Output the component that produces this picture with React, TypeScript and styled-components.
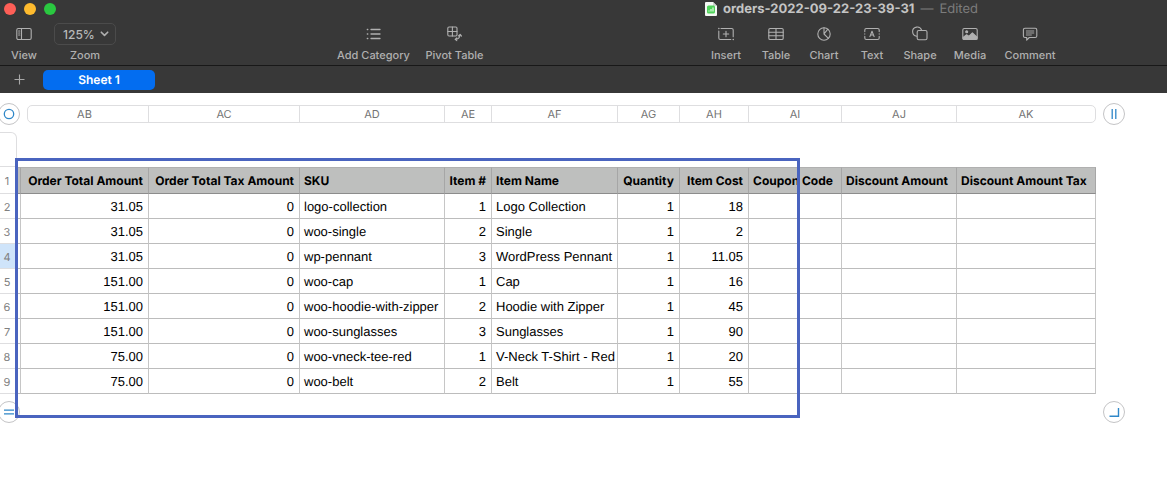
import React from "react";
import styled, { createGlobalStyle } from "styled-components";

const GlobalStyle = createGlobalStyle`
  *, *::before, *::after { box-sizing: border-box; }
  body { margin: 0; background: #fff; text-rendering: geometricPrecision; }
  button, input { font: inherit; color: inherit; text-rendering: inherit; }
`;

const uiFont = `Inter, "Liberation Sans", sans-serif`;
const sheetFont = `"Liberation Sans", Arial, sans-serif`;

const Window = styled.div`
  font-family: ${uiFont};
  overflow-x: hidden;
  min-height: 100vh;
  background: #fff;
`;

const Chrome = styled.header`
  background: #383838;
  color: #b4b4b4;
`;

const TitleBar = styled.div`
  display: flex;
  align-items: center;
  justify-content: space-between;
  height: 18px;
  padding: 0 189px 0 4px;
`;

const Lights = styled.div`
  display: flex;
  gap: 8px;
`;

const Light = styled.button<{ $color: string }>`
  width: 12px;
  height: 12px;
  padding: 0;
  border: 0;
  border-radius: 50%;
  background: ${(p) => p.$color};
`;

const Title = styled.h1`
  display: flex;
  align-items: center;
  gap: 6px;
  margin: 0;
  font-size: 13px;
  line-height: 18px;
  font-weight: 700;
  color: #c4c4c4;
  white-space: nowrap;
`;

const Edited = styled.span`
  display: flex;
  gap: 6px;
  font-weight: 400;
  color: #7c7c7c;
`;

const Toolbar = styled.div`
  display: flex;
  justify-content: space-between;
  height: 48px;
  padding: 4px 104px 0 0;
  border-bottom: 1px solid #181818;
`;

const Group = styled.div<{ $end?: number }>`
  display: flex;
  padding-right: ${(p) => p.$end ?? 0}px;
`;

const Tool = styled.button<{ $width: number }>`
  display: flex;
  flex-direction: column;
  align-items: center;
  width: ${(p) => p.$width}px;
  height: 42px;
  padding: 0;
  border: 0;
  background: none;
  font-size: 11px;
  line-height: 18px;
  font-weight: 500;
  color: #b0b0b0;
  white-space: nowrap;

  svg { display: block; height: 24px; }
`;

const ZoomTool = styled.label`
  display: flex;
  flex-direction: column;
  align-items: center;
  width: 74px;
  font-size: 11px;
  line-height: 18px;
  font-weight: 500;
  color: #b0b0b0;
`;

const ZoomBox = styled.span`
  display: grid;
  align-items: center;
  width: 62px;
  height: 22px;
  margin: 1px 0;
  border: 1px solid #4b4b4b;
  border-radius: 5px;

  > * { grid-area: 1 / 1; }
  svg { justify-self: end; margin-right: 6px; pointer-events: none; }
`;

const ZoomSelect = styled.select`
  appearance: none;
  width: 100%;
  height: 20px;
  padding: 0 0 0 8px;
  border: 0;
  background: transparent;
  font-family: inherit;
  font-size: 12px;
  font-weight: 500;
  color: #b8b8b8;
`;

const Tabs = styled.nav`
  display: flex;
  align-items: center;
  gap: 16px;
  height: 27px;
  padding-left: 12px;
`;

const AddSheet = styled.button`
  display: flex;
  justify-content: center;
  width: 15px;
  padding: 0;
  border: 0;
  background: none;
  color: #a8a8a8;
`;

const Tab = styled.button`
  width: 112px;
  height: 20px;
  padding: 0;
  border: 0;
  border-radius: 5px;
  background: #036df0;
  color: #fff;
  font-size: 12px;
  line-height: 20px;
  font-weight: 600;
`;

const Canvas = styled.main`
  position: relative;
  width: max-content;
  min-width: 100%;
  padding-top: 10px;
`;

const HandleRow = styled.div`
  display: flex;
  align-items: center;
  gap: 7px;
  margin-left: -2px;
`;

const Handle = styled.button`
  display: flex;
  align-items: center;
  justify-content: center;
  width: 22px;
  height: 22px;
  padding: 0;
  border: 1px solid #c4c4c6;
  border-radius: 50%;
  background: #fff;
  color: #2f87c8;
`;

const Letters = styled.div`
  display: flex;
  width: 1069px;
  height: 18px;
  border: 1px solid #dedee0;
  border-radius: 5px;
`;

const Letter = styled.div<{ $width: number }>`
  flex: 0 0 ${(p) => p.$width}px;
  border-right: 1px solid #dedee0;
  font-size: 11px;
  line-height: 16px;
  color: #747474;
  text-align: center;

  &:first-child { padding-right: 7px; }
  &:last-child { flex: 1; border-right: 0; }
`;

const Grid = styled.table`
  width: 1096px;
  margin: 7px 0;
  table-layout: fixed;
  border-collapse: separate;
  border-spacing: 0;
  font-family: ${sheetFont};
  font-size: 13px;
  line-height: 16px;
  color: #000;
`;

const Corner = styled.th`
  height: 35px;
  padding: 0;
  border: 1px solid #dedee0;
  border-left: 0;
  border-radius: 0 6px 0 0;
`;

const RowHead = styled.th<{ $active?: boolean }>`
  height: 25px;
  padding: 1px 2px 0 0;
  border-right: 1px solid #dedee0;
  border-bottom: 1px solid #dedee0;
  background: ${(p) => (p.$active ? "#cfe4fa" : "#fff")};
  font-family: ${uiFont};
  font-size: 11px;
  font-weight: 400;
  color: #808080;
  text-align: center;
`;

const HeadCell = styled.th<{ $right?: boolean }>`
  height: 27px;
  padding: 0 5px 0 4px;
  border-right: 1px solid #a6a6a6;
  border-top: 1px solid #b0b0b0;
  border-bottom: 1px solid #8c8c8c;
  background: #bebfbe;
  font-family: ${uiFont};
  font-size: 12px;
  font-weight: 700;
  text-align: ${(p) => (p.$right ? "right" : "left")};
  white-space: nowrap;
`;

const Cell = styled.td<{ $right?: boolean }>`
  height: 25px;
  padding: 2px 5px 0 4px;
  border-right: 1px solid #c6c6c6;
  border-bottom: 1px solid #bcbcbc;
  text-align: ${(p) => (p.$right ? "right" : "left")};
  white-space: nowrap;
`;

const Highlight = styled.div`
  position: absolute;
  top: 65px;
  left: 15px;
  width: 785px;
  height: 260px;
  border: 3px solid #4a64bf;
  pointer-events: none;
`;

const BottomRow = styled(HandleRow)`
  gap: 1083px;
`;

const columns = [
  { id: "AB", title: "Order Total Amount", width: 128, right: true },
  { id: "AC", title: "Order Total Tax Amount", width: 151, right: true },
  { id: "AD", title: "SKU", width: 145 },
  { id: "AE", title: "Item #", width: 47, right: true },
  { id: "AF", title: "Item Name", width: 126 },
  { id: "AG", title: "Quantity", width: 62, right: true },
  { id: "AH", title: "Item Cost", width: 69, right: true },
  { id: "AI", title: "Coupon Code", width: 93 },
  { id: "AJ", title: "Discount Amount", width: 115 },
  { id: "AK", title: "Discount Amount Tax", width: 139 },
];

const orders = [
  ["31.05", "0", "logo-collection", "1", "Logo Collection", "1", "18"],
  ["31.05", "0", "woo-single", "2", "Single", "1", "2"],
  ["31.05", "0", "wp-pennant", "3", "WordPress Pennant", "1", "11.05"],
  ["151.00", "0", "woo-cap", "1", "Cap", "1", "16"],
  ["151.00", "0", "woo-hoodie-with-zipper", "2", "Hoodie with Zipper", "1", "45"],
  ["151.00", "0", "woo-sunglasses", "3", "Sunglasses", "1", "90"],
  ["75.00", "0", "woo-vneck-tee-red", "1", "V-Neck T-Shirt - Red", "1", "20"],
  ["75.00", "0", "woo-belt", "2", "Belt", "1", "55"],
];

const Icon = ({ children }: { children: React.ReactNode }) => (
  <svg width="20" height="24" viewBox="0 0 20 24" fill="none" stroke="currentColor" strokeWidth="1.1" strokeLinecap="round" strokeLinejoin="round" aria-hidden="true">
    {children}
  </svg>
);

const icons = {
  view: (
    <>
      <rect x="2.8" y="6.5" width="14.4" height="11" rx="1.5" />
      <path d="M7.5 6.5v11M4.6 9h1.2M4.6 11h1.2M4.6 13h1.2" />
    </>
  ),
  category: <path d="M7 7.5h9M7 12h9M7 16.5h9M3.3 7.5h.5M3.3 12h.5M3.3 16.5h.5" strokeWidth="1.3" />,
  pivot: (
    <>
      <rect x="2.8" y="5" width="9.2" height="9" rx="1.2" />
      <path d="M7.4 5v9M2.8 9.5h9.2M10.5 17.3c2.8 0 4.3-1.5 4.6-4.6M13.5 14l1.7-1.7 1.3 1.8M11.8 15.8l-1.7 1.5 1.7 1.3" />
    </>
  ),
  insert: (
    <>
      <path d="M5 6.5h10.7q1.5 0 1.5 1.5v6.8M2.8 9v7q0 1.5 1.5 1.5h10.5M10 9.3v5.4M7.3 12h5.4" />
      <path d="M2.8 6.5h.1M17.2 17.5h.1" strokeWidth="1.5" />
    </>
  ),
  table: (
    <>
      <rect x="2.8" y="6.5" width="14.4" height="11" rx="1.3" />
      <path d="M10 6.5v11M2.8 10.2h14.4M2.8 13.8h14.4" />
    </>
  ),
  chart: (
    <>
      <circle cx="10" cy="12" r="6.2" />
      <path d="M10 5.8V12l4.4 4.4M10 12l3.8-4.8" />
    </>
  ),
  text: (
    <>
      <path d="M2.8 9.6V8q0-1.5 1.5-1.5h11.4q1.5 0 1.5 1.5v1.6M17.2 14.4V16q0 1.5-1.5 1.5H4.3q-1.5 0-1.5-1.5v-1.6M2.8 11.9v.2M17.2 11.9v.2" />
      <path d="M7.9 14.6L10 9.2l2.1 5.4M8.6 13h2.8" />
    </>
  ),
  shape: (
    <>
      <path d="M6.8 14.2A4.6 4.6 0 1 1 11.6 8.2" />
      <rect x="7.2" y="8.5" width="9.8" height="9.3" rx="1.6" />
    </>
  ),
  media: (
    <>
      <rect x="2.8" y="6.5" width="14.4" height="11" rx="1.5" />
      <path d="M3.2 15.5l3.4-2.7 2.2 1.5 3.6-3.4 4.6 4.2v2H3.2z" fill="currentColor" />
      <circle cx="6.7" cy="9.7" r="1" fill="currentColor" />
    </>
  ),
  comment: (
    <>
      <path d="M5 6.3h10.2q1.6 0 1.6 1.6v6q0 1.6-1.6 1.6H9.3l-2.6 2.7v-2.7H5q-1.6 0-1.6-1.6v-6q0-1.6 1.6-1.6z" />
      <path d="M6.4 9h7.4M6.4 11h7.4M6.4 13h5" strokeWidth="0.9" />
    </>
  ),
};

type ToolItem = [keyof typeof icons, string, number];

const categoryTools: ToolItem[] = [
  ["category", "Add Category", 82],
  ["pivot", "Pivot Table", 80],
];

const insertTools: ToolItem[] = [
  ["insert", "Insert", 50],
  ["table", "Table", 50],
  ["chart", "Chart", 46],
  ["text", "Text", 50],
  ["shape", "Shape", 46],
  ["media", "Media", 54],
  ["comment", "Comment", 66],
];

const renderTools = (items: ToolItem[]) =>
  items.map(([icon, label, width]) => (
    <Tool key={label} $width={width}>
      <Icon>{icons[icon]}</Icon>
      {label}
    </Tool>
  ));

export default function App() {
  return (
    <Window>
      <GlobalStyle />
      <Chrome>
        <TitleBar>
          <Lights>
            <Light $color="#fe5f57" aria-label="Close" />
            <Light $color="#febb2e" aria-label="Minimize" />
            <Light $color="#2ac840" aria-label="Full screen" />
          </Lights>
          <Title>
            <svg width="12" height="14" viewBox="0 0 12 14" aria-hidden="true">
              <path d="M1 0h7l4 4v9q0 1-1 1H1q-1 0-1-1V1q0-1 1-1z" fill="#f5f8f5" />
              <path d="M8 0l4 4H8z" fill="#cfd4cf" />
              <rect x="2" y="3.5" width="8" height="8" rx="1.5" fill="#4fd35a" />
              <path d="M4 9.5V8.5M6 9.5V7M8 9.5v-4" stroke="#c9f7cc" strokeWidth="1.4" />
            </svg>
            orders-2022-09-22-23-39-31
            <Edited>
              <span>—</span>
              <span>Edited</span>
            </Edited>
          </Title>
        </TitleBar>
        <Toolbar>
          <Group $end={4}>
            {renderTools([["view", "View", 48]])}
            <ZoomTool>
              <ZoomBox>
                <ZoomSelect defaultValue="125%">
                  <option>100%</option>
                  <option>125%</option>
                  <option>150%</option>
                </ZoomSelect>
                <svg width="9" height="6" viewBox="0 0 9 6" fill="none" stroke="currentColor" strokeWidth="1.6" strokeLinecap="round" strokeLinejoin="round" aria-hidden="true">
                  <path d="M1.3 1.2l3.2 3.2 3.2-3.2" />
                </svg>
              </ZoomBox>
              Zoom
            </ZoomTool>
          </Group>
          <Group>{renderTools(categoryTools)}</Group>
          <Group>{renderTools(insertTools)}</Group>
        </Toolbar>
        <Tabs aria-label="Sheets">
          <AddSheet aria-label="Add sheet">
            <svg width="11" height="11" viewBox="0 0 11 11" stroke="currentColor" strokeWidth="1.1" aria-hidden="true">
              <path d="M5.5 .5v10M.5 5.5h10" />
            </svg>
          </AddSheet>
          <Tab>Sheet 1</Tab>
        </Tabs>
      </Chrome>
      <Canvas>
        <HandleRow>
          <Handle aria-label="Select table">
            <svg width="12" height="12" viewBox="0 0 12 12" fill="none" stroke="currentColor" strokeWidth="1.3">
              <circle cx="6" cy="6" r="4.7" />
            </svg>
          </Handle>
          <Letters>
            {columns.map((c, i) => (
              <Letter key={c.id} $width={i === 0 ? c.width - 7 : c.width}>
                {c.id}
              </Letter>
            ))}
          </Letters>
          <Handle aria-label="Add columns">
            <svg width="12" height="12" viewBox="0 0 12 12" stroke="currentColor" strokeWidth="1.3">
              <path d="M4.2 1v10M7.8 1v10" />
            </svg>
          </Handle>
        </HandleRow>
        <Grid>
          <colgroup>
            <col width={17} />
            <col width={4} />
            {columns.map((c) => (
              <col key={c.id} width={c.width} />
            ))}
          </colgroup>
          <thead>
            <tr>
              <Corner />
              <td colSpan={11} />
            </tr>
            <tr>
              <RowHead scope="row">1</RowHead>
              <HeadCell />
              {columns.map((c) => (
                <HeadCell key={c.id} scope="col" $right={c.right}>
                  {c.title}
                </HeadCell>
              ))}
            </tr>
          </thead>
          <tbody>
            {orders.map((row, r) => (
              <tr key={r}>
                <RowHead scope="row" $active={r === 2}>
                  {r + 2}
                </RowHead>
                <Cell />
                {columns.map((c, i) => (
                  <Cell key={c.id} $right={c.right}>
                    {row[i]}
                  </Cell>
                ))}
              </tr>
            ))}
          </tbody>
        </Grid>
        <BottomRow>
          <Handle aria-label="Add rows">
            <svg width="12" height="12" viewBox="0 0 12 12" stroke="currentColor" strokeWidth="1.3">
              <path d="M1 4.2h10M1 7.8h10" />
            </svg>
          </Handle>
          <Handle aria-label="Resize table">
            <svg width="12" height="12" viewBox="0 0 12 12" fill="none" stroke="currentColor" strokeWidth="1.4">
              <path d="M1.5 10.2h9V2" />
            </svg>
          </Handle>
        </BottomRow>
        <Highlight />
      </Canvas>
    </Window>
  );
}
